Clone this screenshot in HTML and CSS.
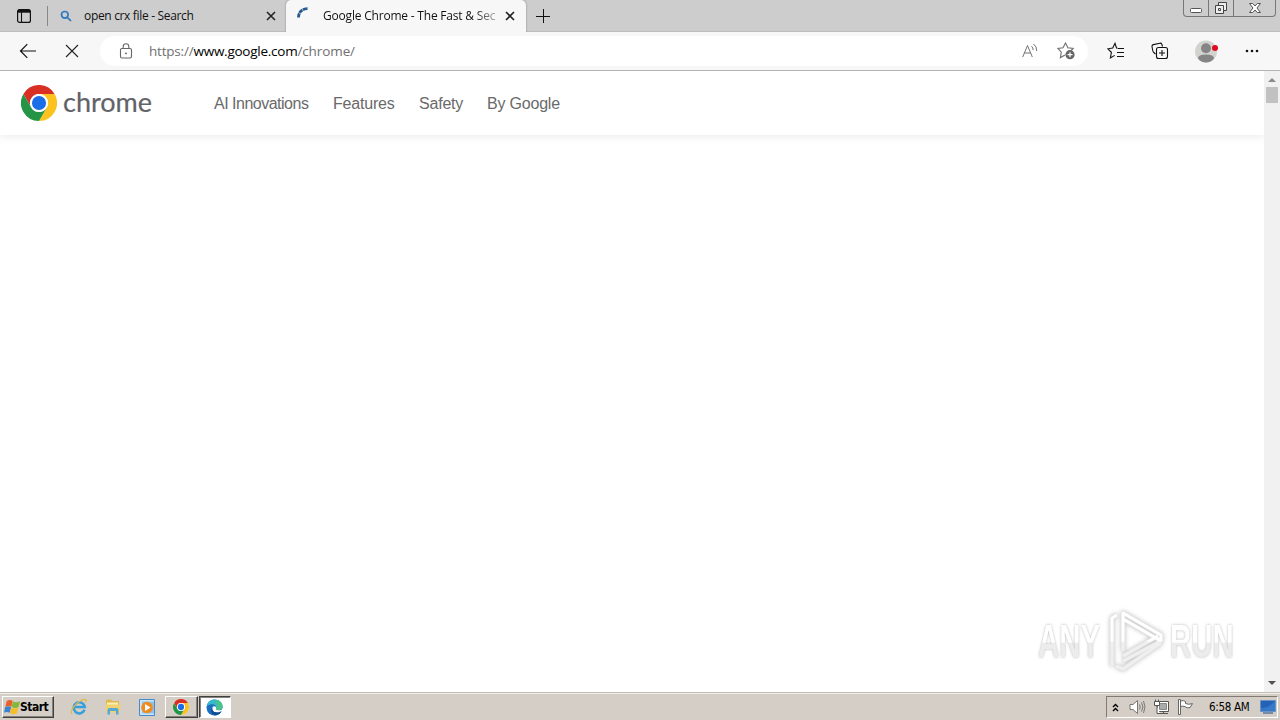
FILE: index.html
```html
<!DOCTYPE html>
<html lang="en">
<head>
  <meta charset="UTF-8">
  <title>Google Chrome - The Fast &amp; Secure Web Browser</title>
  <link rel="stylesheet" href="styles.css">
</head>
<body>
  <svg class="defs" width="0" height="0">
    <symbol id="chrome-logo" viewBox="0 0 48 48">
      <circle cx="24" cy="24" r="24" fill="#fff"/>
      <path d="M3.2 12A24 24 0 0 1 44.8 12H24A12 12 0 0 0 13.6 30Z" fill="#d93025"/>
      <path d="M44.8 12A24 24 0 0 1 24 48L34.4 30A12 12 0 0 0 24 12Z" fill="#fcc31e"/>
      <path d="M24 48A24 24 0 0 1 3.2 12L13.6 30A12 12 0 0 0 34.4 30Z" fill="#249447"/>
      <circle cx="24" cy="24" r="12" fill="#fff"/>
      <circle cx="24" cy="24" r="9.4" fill="#1a6fe8"/>
    </symbol>
  </svg>

  <div class="tab-bar">
    <svg class="tab-actions" width="16" height="16" viewBox="0 0 16 16" fill="none" stroke="#111">
      <rect x="1.6" y="1.6" width="12.8" height="12.8" rx="2" stroke-width="1.2"/>
      <path d="M2 3.2h12" stroke-width="3"/>
      <path d="M5.5 4v10" stroke-width="1.1"/>
    </svg>
    <div class="divider"></div>
    <div class="tab">
      <svg class="tab-icon" width="12" height="12" viewBox="0 0 12 12" fill="none" stroke="#2d78bd" stroke-width="1.7">
        <circle cx="4.8" cy="4.8" r="3.3"/>
        <path d="M7.3 7.3l3.7 3.7"/>
      </svg>
      <span class="tab-title">open crx file - Search</span>
      <svg class="tab-close" width="10" height="10" viewBox="0 0 10 10" stroke="#222" stroke-width="1.6"><path d="M1 1l8 8M9 1L1 9"/></svg>
    </div>
    <div class="tab active">
      <svg class="tab-icon" width="12" height="12" viewBox="0 0 12 12" fill="none" stroke="#28588c" stroke-width="2.8">
        <path d="M1.500 10.500C1.500 5 5 1.800 11 1.600" stroke-dasharray="4.200 .5"/>
      </svg>
      <span class="tab-title">Google Chrome - The Fast &amp; Sec</span>
      <svg class="tab-close" width="10" height="10" viewBox="0 0 10 10" stroke="#222" stroke-width="1.6"><path d="M1 1l8 8M9 1L1 9"/></svg>
    </div>
    <svg class="new-tab" width="14" height="14" viewBox="0 0 14 14" stroke="#111" stroke-width="1"><path d="M7.5 0v14M0 7.5h14"/></svg>
    <div class="window-controls">
      <div class="wc wc-min">
        <svg width="14" height="7" viewBox="0 0 14 7"><rect x="1.5" y="1.5" width="11" height="4" rx="1" fill="#fff" stroke="#555"/></svg>
      </div>
      <div class="wc wc-restore">
        <svg width="14" height="14" viewBox="0 0 14 14" fill="#eee" stroke="#444">
          <path d="M4.5 1.5h8v8h-8z"/>
          <path d="M1.5 4.5h8v8h-8z"/>
          <path d="M4.5 7.5h2v2h-2z"/>
        </svg>
      </div>
      <div class="wc wc-close">
        <svg width="14" height="12" viewBox="0 0 14 12"><path d="M1.5 1.5h3.2L7 4l2.3-2.5h3.2L9 6l3.5 4.5H9.3L7 8l-2.3 2.5H1.5L5 6z" fill="#fff" stroke="#555"/></svg>
      </div>
    </div>
  </div>

  <div class="toolbar">
    <svg class="back" width="18" height="16" viewBox="0 0 18 16" fill="none" stroke="#111" stroke-width="1.2"><path d="M17 8H1.500M8.300 1.200L1.500 8l6.800 6.800"/></svg>
    <svg class="stop" width="14" height="14" viewBox="0 0 14 14" stroke="#222" stroke-width="1.1"><path d="M1 1l12 12M13 1L1 13"/></svg>
    <div class="address">
      <svg class="lock" width="14" height="16" viewBox="0 0 14 16" fill="none" stroke="#666" stroke-width="1.1">
        <rect x="1.5" y="5.5" width="11" height="9.5" rx="1.5"/>
        <path d="M4.2 5.5V3.6a2.8 2.8 0 0 1 5.6 0v1.9"/>
        <circle cx="7" cy="10.3" r=".9" fill="#555" stroke="none"/>
      </svg>
      <div class="url"><span class="scheme">https://</span><span class="host">www.google.com</span><span class="path">/chrome/</span></div>
      <svg class="read-aloud" width="16" height="16" viewBox="0 0 16 16" fill="none" stroke="#737373" stroke-width="1">
        <path d="M.7 14L5.500 2.500 10.300 14M2.400 10h6.200"/>
        <path d="M9.500 3.200q1.800 1.500 1.600 4M11.500 1q3.400 2.300 3.200 7"/>
      </svg>
      <svg class="add-fav" width="19" height="18" viewBox="0 0 19 18" fill="none" stroke="#707070" stroke-width="1.1">
        <path d="M8 13l-4.600 2.600.9-5.500L.9 6.500l5.100-.8L8.500 1l2.400 4.700 5.300.8-2 2"/>
        <circle cx="13" cy="12.700" r="4.600" fill="#656565" stroke="none"/>
        <path d="M13 10.200v5M10.500 12.700h5" stroke="#fff" stroke-width="1.2"/>
      </svg>
    </div>
    <svg class="favorites" width="18" height="18" viewBox="0 0 18 18" fill="none" stroke="#111" stroke-width="1.1">
      <path d="M10.700 6.200L9.500 6 8 1.300 5.700 6 .9 6.800l3.500 3.500-1 5.700 4.300-2.600"/>
      <path d="M11 6.500h6M10 10.500h7M10 14.500h7"/>
    </svg>
    <svg class="collections" width="18" height="18" viewBox="0 0 18 18" fill="none" stroke="#111" stroke-width="1.1">
      <path d="M4.500 12L2.800 10.500Q2 9.800 1.700 8.500L1 4.500Q.8 2.900 2.300 2.600L9 1.200q1.300-.2 1.800 1L11.500 4.500"/>
      <rect x="5.500" y="5.500" width="11" height="11" rx="2"/>
      <path d="M11 8v6M8 11h6"/>
    </svg>
    <svg class="profile" width="23" height="23" viewBox="0 0 23 23">
      <circle cx="11" cy="11.500" r="11" fill="#d2d2cf"/>
      <circle cx="11" cy="8.200" r="5" fill="#858585"/>
      <path d="M3 18.500q0-4 8-4t8 4q-3 4-8 4t-8-4z" fill="#858585"/>
      <circle cx="20" cy="8" r="3" fill="#e00b1c"/>
    </svg>
    <svg class="more" width="14" height="4" viewBox="0 0 14 4" fill="#111"><circle cx="2" cy="2" r="1.3"/><circle cx="7" cy="2" r="1.3"/><circle cx="12" cy="2" r="1.3"/></svg>
  </div>

  <div class="viewport">
    <div class="page">
      <header class="site-header">
        <svg class="logo" width="36" height="36"><use href="#chrome-logo"/></svg>
        <span class="wordmark">chrome</span>
        <nav class="site-nav">
          <a class="nav-ai">AI Innovations</a>
          <a class="nav-features">Features</a>
          <a class="nav-safety">Safety</a>
          <a class="nav-google">By Google</a>
        </nav>
      </header>
      <div class="watermark">
        <span class="wm-text wm-any">ANY</span>
        <svg width="60" height="64" viewBox="0 0 60 64" fill="none" stroke-linejoin="round">
          <defs>
            <linearGradient id="wm-fade" gradientUnits="userSpaceOnUse" x1="0" y1="0" x2="0" y2="64">
              <stop offset=".5" stop-color="#fff"/>
              <stop offset=".52" stop-color="#efefef"/>
            </linearGradient>
          </defs>
          <path class="wm-edge" d="M6 57V9l5-3M17 42V4l38 22v6L17 10M17 47l35-20M17 52l38-20M10 57l7 3 38-26"/>
          <path class="wm-line" d="M6 57V9l5-3M17 42V4l38 22v6L17 10M17 47l35-20M17 52l38-20M10 57l7 3 38-26"/>
        </svg>
        <span class="wm-text wm-run">RUN</span>
      </div>
    </div>
    <div class="scrollbar">
      <div class="arrow-up"></div>
      <div class="thumb"></div>
      <div class="arrow-down"></div>
    </div>
  </div>

  <div class="taskbar">
    <div class="start">
      <svg width="17" height="16" viewBox="0 0 17 16">
        <path d="M2.800 2q3-2 6 0L7.300 7.800q-2.800-1.600-6 0z" fill="#e8602c"/>
        <path d="M9.100 2.500q3 1.600 7-.3L14.500 8.200q-3.500 1.500-6.900-.2z" fill="#83b83a"/>
        <path d="M1.100 8.200q3-1.800 6 0L5.600 13.800q-2.900-1.700-5.600 0z" fill="#3a83cf"/>
        <path d="M7.400 8.600q3 1.700 6.900.1l-1.500 5.800q-3.300 1.600-6.800-.2z" fill="#f6bd27"/>
      </svg>
      <span>Start</span>
    </div>
    <div class="quick-item">
      <svg width="18" height="18" viewBox="0 0 18 18" fill="none">
        <path d="M14.500 11.800A5.600 5.600 0 1 1 14.800 9H4" stroke="#36a0dc" stroke-width="2.500"/>
        <path d="M2 16C-.5 14 4 6 11 2.500c5-2.300 6-.5 4.500 2" stroke="#e6b73b" stroke-width="1.200"/>
      </svg>
    </div>
    <div class="quick-item">
      <svg width="18" height="18" viewBox="0 0 18 18">
        <path d="M2 3l1-1.500h4L8 3h7v11H2z" fill="#dfb94e"/>
        <path d="M3 4.500h11v7H3z" fill="#fbeeb0"/>
        <path d="M1.500 6.500h15l-.5 8H2z" fill="#f0d272"/>
        <path d="M3.500 16.500V12q0-2 2-2h7q2 0 2 2v4.500H12V13H6v3.500z" fill="#55a8d6"/>
      </svg>
    </div>
    <div class="quick-item">
      <svg width="16" height="17" viewBox="0 0 16 17">
        <path d="M.5.5h15v16H.5z" fill="#cce5f8" stroke="#448bc9"/>
        <path d="M3 2.500h12v12H3z" fill="#8fc2e9"/>
        <circle cx="8" cy="8.500" r="5.800" fill="#f18a1f"/>
        <path d="M6 5l5.500 3.500L6 12z" fill="#fff"/>
      </svg>
    </div>
    <div class="task-button"><svg width="16" height="16"><use href="#chrome-logo"/></svg></div>
    <div class="task-button pressed">
      <svg width="17" height="17" viewBox="0 0 17 17">
        <circle cx="8.500" cy="8.500" r="8" fill="#1c6fc0"/>
        <path d="M.6 7.500C1.500 2.500 5 .4 8.700.4c5 0 8 3.600 7.900 6.800 0 2.500-2 4-4.300 4-2.200 0-3-.8-2.300-1.700C11 7.500 9 5.300 6.200 5.300 3.500 5.300 1.500 6.300.6 7.500z" fill="#36b8cd"/>
        <path d="M11 1c4 1.200 5.700 4 5.600 6.200 0 2.500-2 4-4.300 4-2.200 0-3-.8-2.300-1.700C12 7 12 4 8 2z" fill="#50c477" opacity=".8"/>
        <path d="M6.500 8q-1 3.500 2 5 3.500 1.300 7-.8l1.500 1V9.500c-1.500 1.700-3 1.900-4.700 1.700-2.200 0-3-.8-2.300-1.700q.5-1-.5-2-1.800-.8-3 .5z" fill="#fff"/>
        <path d="M6.500 8q-1 3.500 2 5 3.500 1.300 7-.8-2 4-6.500 4.200Q3 14 6.500 8z" fill="#124c91"/>
      </svg>
    </div>
    <div class="tray">
      <svg class="chevrons" width="7" height="9" viewBox="0 0 7 9" fill="none" stroke="#000" stroke-width="1.400"><path d="M1 4l2.500-2.500L6 4M1 8l2.500-2.500L6 8"/></svg>
      <svg class="volume" width="17" height="16" viewBox="0 0 17 16" fill="none" stroke="#777">
        <path d="M1 5.500h3l4.500-4v13l-4.500-4H1z" fill="#fff"/>
        <path d="M10.500 5.500q1.500 2.500 0 5M12.500 3.500q3 4.500 0 9M14.500 2q3 6 0 12"/>
      </svg>
      <svg class="network" width="17" height="16" viewBox="0 0 17 16" stroke="#555">
        <path d="M4.500 2.500h11v10h-11z" fill="#fff"/>
        <path d="M6.500 4.500h7v6h-7z" fill="#aaa" stroke="#888"/>
        <path d="M6 14.500h9M10.500 12v2"/>
        <path d="M1.500 2.500h5v4h-5zM2.500.500v2M5.500.500v2M4 7v7.500h3" fill="#fff"/>
      </svg>
      <svg class="flag" width="17" height="16" viewBox="0 0 17 16" fill="#fff" stroke="#666"><path d="M1.500.500h2v15h-2zM3.500 2q3-1 5 .5v2q3 1.500 7 .1l-2.500 4q-3 1-5-1-2-1-4.500 0z"/></svg>
      <span class="clock">6:58 AM</span>
      <svg class="show-desktop" width="16" height="14" viewBox="0 0 16 14">
        <path d="M.5.5h15v11H.5z" fill="#2362b7" stroke="#6b91c2"/>
        <path d="M1 8q8 0 14-7v10H1z" fill="#3778c8"/>
        <path d="M3 13h10" stroke="#174a8b"/>
      </svg>
    </div>
  </div>
</body>
</html>
```

FILE: styles.css
```css
* { box-sizing: border-box; }
body {
  margin: 0;
  width: 1280px;
  height: 720px;
  overflow: hidden;
  display: flex;
  flex-direction: column;
  background: #fff;
  font-family: "Open Sans", "Noto Sans", sans-serif;
  color: #111;
}
svg { display: block; flex: none; }
.defs { position: absolute; }

/* tabs */
.tab-bar {
  height: 32px;
  flex: none;
  display: flex;
  align-items: center;
  background: #cdcdcd;
  border-bottom: 1px solid #bdbdbd;
}
.tab-actions { margin-left: 16px; }
.divider {
  width: 1px;
  height: 20px;
  margin-left: 15px;
  background: #888;
}
.tab {
  width: 238px;
  height: 31px;
  display: flex;
  align-items: center;
  padding: 0 10px 0 12px;
  font-size: 12px;
}
.tab-icon { margin-right: 12px; }
.tab-title {
  flex: 1;
  white-space: nowrap;
  overflow: hidden;
  letter-spacing: -0.33px;
}
.tab.active {
  width: 240px;
  height: 32px;
  align-self: flex-start;
  padding: 0 11px 1px 11px;
  background: #f7f7f7;
  border-radius: 5px 5px 0 0;
  box-shadow: 0 0 2px rgba(0,0,0,0.4);
  clip-path: inset(0 -3px 0 -3px);
}
.active .tab-icon { margin: -5px 14px 0 0; }
.active .tab-title {
  flex: none;
  width: 173px;
  margin-right: 9px;
  letter-spacing: -0.2px;
  background: linear-gradient(90deg, #111 150px, #bbb 175px);
  background-clip: text;
  -webkit-background-clip: text;
  color: transparent;
}
.new-tab { margin-left: 10px; }
.window-controls {
  display: flex;
  align-self: flex-start;
  height: 17px;
  margin: 0 4px 0 auto;
  border: 1px solid #777;
  border-top: none;
  border-radius: 0 0 4px 4px;
}
.wc {
  display: flex;
  align-items: center;
  justify-content: center;
  border-right: 1px solid #777;
}
.wc-min { width: 25px; padding-top: 4px; }
.wc-restore { width: 25px; }
.wc-close { width: 41px; border-right: none; }

/* toolbar */
.toolbar {
  height: 39px;
  flex: none;
  display: flex;
  align-items: center;
  background: #f7f7f7;
  border-bottom: 1px solid #b4b4b4;
}
.back { margin-left: 19px; }
.stop { margin-left: 28px; }
.address {
  width: 988px;
  height: 30px;
  margin-left: 21px;
  display: flex;
  align-items: center;
  padding: 0 12px 0 19px;
  border-radius: 15px;
  background: #fff;
}
.url {
  margin-left: 16px;
  font-size: 13.5px;
  white-space: nowrap;
}
.scheme, .path { color: #707070; }
.scheme { letter-spacing: -0.2px; }
.host { letter-spacing: -0.25px; color: #000; }
.path { letter-spacing: -0.1px; }
.read-aloud { margin-left: auto; }
.add-fav { margin-left: 19px; }
.favorites { margin-left: 19px; }
.collections { margin-left: 26px; }
.profile { margin-left: 26px; }
.more { margin-left: 27px; }

/* page */
.viewport {
  flex: 1;
  display: flex;
  min-height: 0;
}
.page {
  flex: 1;
  display: flex;
  flex-direction: column;
  justify-content: space-between;
}
.site-header {
  height: 64px;
  display: flex;
  align-items: center;
  padding-left: 21px;
  box-shadow: 0 2px 8px rgba(0,0,0,0.08);
  clip-path: inset(0 0 -12px 0);
}
.wordmark {
  width: 90px;
  margin: -3px 0 0 6px;
  font-family: Lato, sans-serif;
  font-size: 27px;
  color: #5f6368;
  -webkit-text-stroke: 0.2px #5f6368;
}
.site-nav {
  display: flex;
  gap: 24px;
  margin-left: 61px;
  padding-top: 1px;
  font-family: "Liberation Sans", Arial, sans-serif;
  font-size: 16px;
  letter-spacing: -0.2px;
  color: #6a6a6a;
  white-space: nowrap;
}
.nav-ai { width: 95px; letter-spacing: -0.5px; }
.nav-features { width: 62px; }
.nav-safety { width: 44px; }
.watermark {
  align-self: flex-end;
  height: 64px;
  display: flex;
  align-items: center;
  margin: 0 30px 19px 0;
  font-family: "Liberation Sans", Arial, sans-serif;
  font-size: 46px;
  font-weight: bold;
}
.wm-text {
  display: block;
  width: 100px;
  margin-right: -36px;
  white-space: nowrap;
  background: linear-gradient(#fff 52%, #ececec 54%);
  background-clip: text;
  -webkit-background-clip: text;
  color: transparent;
  filter: drop-shadow(0 0 1.5px rgba(0,0,0,0.28));
  transform: scaleX(0.64);
  transform-origin: left;
}
.wm-any { margin-left: 1px; margin-right: -37px; }
.watermark svg { margin: 0 4px 0 5px; filter: drop-shadow(0 0 2px rgba(0,0,0,0.25)); }
.wm-edge { stroke: #e2e2e2; stroke-width: 4.5; }
.wm-line { stroke: url(#wm-fade); stroke-width: 3; }
.scrollbar {
  width: 16px;
  display: flex;
  flex-direction: column;
  align-items: center;
  background: #f1f1f1;
}
.arrow-up {
  margin-top: 7px;
  border: 4px solid transparent;
  border-top: 0;
  border-bottom-color: #8b8b8b;
}
.thumb {
  width: 12px;
  height: 16px;
  margin-top: 5px;
  background: #c1c1c1;
}
.arrow-down {
  margin: auto 0 7px;
  border: 4px solid transparent;
  border-bottom: 0;
  border-top-color: #505050;
}

/* taskbar */
.taskbar {
  height: 28px;
  flex: none;
  display: flex;
  align-items: center;
  padding: 1px 2px 0 2px;
  background: #d5cec6;
  border-top: 1px solid #c3bfb9;
  box-shadow: inset 0 1px #f0ece7;
}
.start, .task-button {
  display: flex;
  align-items: center;
  height: 22px;
  border: 1px solid;
  border-color: #fff #404040 #404040 #fff;
  box-shadow: inset -1px -1px #85817b;
}
.start {
  width: 52px;
  padding-left: 1px;
  margin-right: 8px;
  font-family: "DejaVu Sans Condensed", "DejaVu Sans", sans-serif;
  font-size: 12px;
  font-weight: bold;
  letter-spacing: -0.5px;
  color: #000;
}
.start span { margin-left: -1px; }
.quick-item {
  width: 34px;
  display: flex;
  justify-content: center;
}
.task-button {
  width: 33px;
  margin-right: 1px;
  padding-right: 1px;
  justify-content: center;
}
.quick-item + .task-button { margin-left: 1px; }
.task-button.pressed {
  width: 32px;
  background: #fff;
  border-color: #404040 #fff #fff #404040;
  box-shadow: inset 1px 1px #85817b;
}
.tray {
  width: 172px;
  height: 22px;
  display: flex;
  align-items: center;
  margin-left: auto;
  padding-left: 5px;
  border: 1px solid;
  border-color: #817b73 #fff #fff #817b73;
}
.volume { margin-left: 10px; }
.network { margin-left: 7px; }
.flag { margin-left: 7px; }
.clock {
  width: 42px;
  margin-left: 15px;
  font-family: "DejaVu Sans Condensed", "DejaVu Sans", sans-serif;
  font-size: 11.5px;
  letter-spacing: -0.3px;
  color: #000;
  white-space: nowrap;
}
.show-desktop { margin-left: 9px; }
```
